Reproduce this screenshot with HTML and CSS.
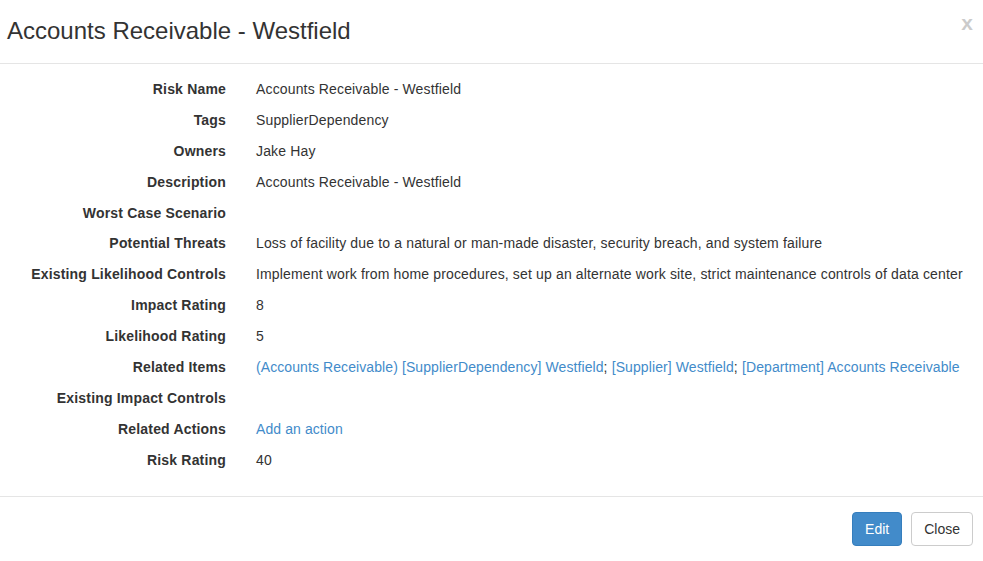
FILE: index.html
```html
<!DOCTYPE html>
<html>
<head>
<meta charset="utf-8">
<link rel="stylesheet" href="styles.css">
</head>
<body>
<div class="modal">
  <div class="modal-header">
    <h4 class="modal-title">Accounts Receivable - Westfield</h4>
    <button class="close" type="button">x</button>
  </div>
  <div class="modal-body">
    <dl class="details">
      <dt>Risk Name</dt><dd>Accounts Receivable - Westfield</dd>
      <dt>Tags</dt><dd>SupplierDependency</dd>
      <dt>Owners</dt><dd>Jake Hay</dd>
      <dt>Description</dt><dd>Accounts Receivable - Westfield</dd>
      <dt>Worst Case Scenario</dt><dd></dd>
      <dt>Potential Threats</dt><dd>Loss of facility due to a natural or man-made disaster, security breach, and system failure</dd>
      <dt>Existing Likelihood Controls</dt><dd>Implement work from home procedures, set up an alternate work site, strict maintenance controls of data center</dd>
      <dt>Impact Rating</dt><dd>8</dd>
      <dt>Likelihood Rating</dt><dd>5</dd>
      <dt>Related Items</dt><dd><a href="#">(Accounts Receivable) [SupplierDependency] Westfield</a>; <a href="#">[Supplier] Westfield</a>; <a href="#">[Department] Accounts Receivable</a></dd>
      <dt>Existing Impact Controls</dt><dd></dd>
      <dt>Related Actions</dt><dd><a href="#">Add an action</a></dd>
      <dt>Risk Rating</dt><dd>40</dd>
    </dl>
  </div>
  <div class="modal-footer">
    <button class="btn btn-primary" type="button">Edit</button>
    <button class="btn btn-default" type="button">Close</button>
  </div>
</div>
</body>
</html>
```

FILE: styles.css
```css
html, body {
  margin: 0;
  padding: 0;
  background: #fff;
}
body {
  font-family: "Liberation Sans", Arial, Helvetica, sans-serif;
  font-size: 14px;
  line-height: 20px;
  color: #333;
}
.modal {
  width: 983px;
  height: 561px;
  overflow: hidden;
}
.modal-header {
  display: flex;
  justify-content: space-between;
  align-items: flex-start;
  box-sizing: border-box;
  height: 64px;
  padding: 18px 10px 0 7px;
  border-bottom: 1px solid #e5e5e5;
}
.modal-title {
  margin: 0;
  font-size: 24px;
  font-weight: 400;
  line-height: 26px;
  color: #333;
}
.close {
  margin-top: -6px;
  padding: 0;
  border: 0;
  background: transparent;
  font-family: "Liberation Sans", Arial, sans-serif;
  font-size: 21px;
  font-weight: 700;
  line-height: 1;
  color: #000;
  opacity: 0.2;
  cursor: pointer;
}
.modal-body {
  padding: 15px 0 26px 0;
  border-bottom: 1px solid #e5e5e5;
}
.details {
  display: grid;
  grid-template-columns: 226px 1fr;
  column-gap: 30px;
  row-gap: 10.9px;
  margin: 0;
  letter-spacing: 0.15px;
}
.details dt {
  font-weight: 700;
  text-align: right;
  white-space: nowrap;
  letter-spacing: 0.18px;
}
.details dd {
  margin: 0;
  white-space: nowrap;
  min-height: 20px;
}
a {
  color: #428bca;
  text-decoration: none;
}
.details a {
  letter-spacing: 0.09px;
}
.modal-footer {
  display: flex;
  justify-content: flex-end;
  gap: 9px;
  padding: 15px 10px 15px 0;
}
.btn {
  box-sizing: border-box;
  height: 34px;
  padding: 6px 12px;
  font-family: "Liberation Sans", Arial, sans-serif;
  font-size: 14px;
  line-height: 20px;
  border: 1px solid transparent;
  border-radius: 4px;
  cursor: pointer;
}
.btn-primary {
  color: #fff;
  background: #428bca;
  border-color: #357ebd;
}
.btn-default {
  color: #333;
  background: #fff;
  border-color: #ccc;
}
```
